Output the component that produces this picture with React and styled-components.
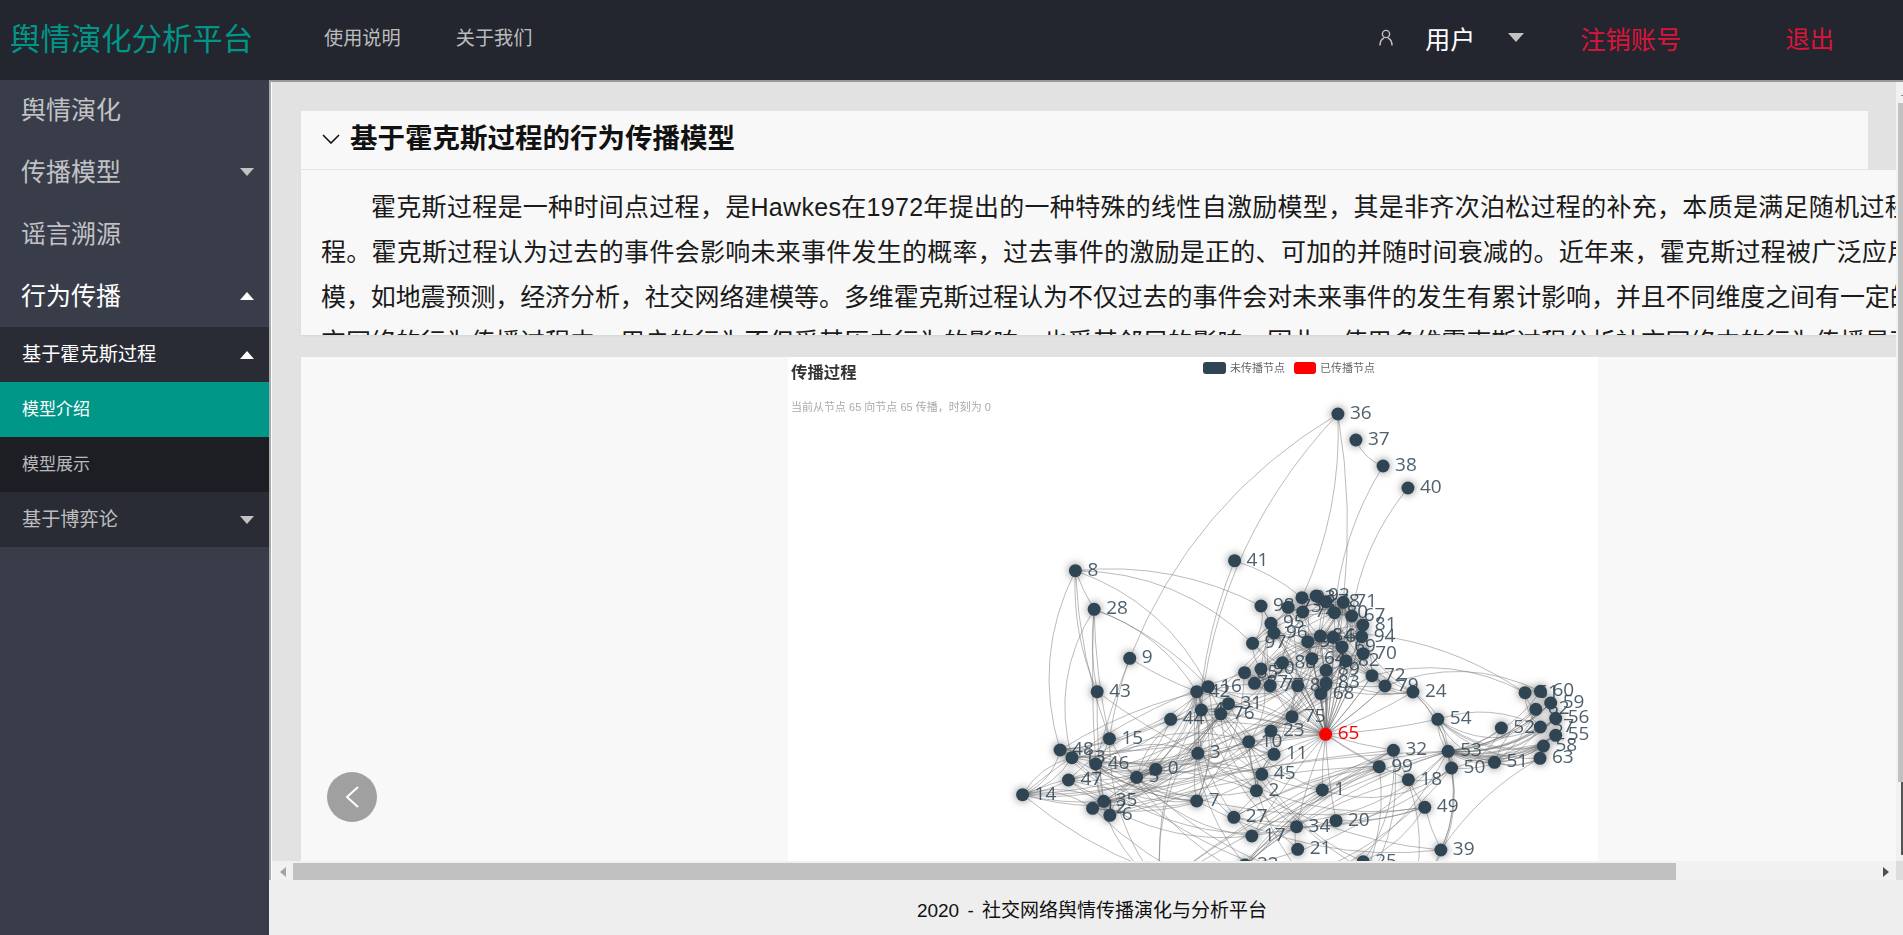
import React from 'react';
import styled, { createGlobalStyle } from 'styled-components';

const FONT = '"Liberation Sans", "Noto Sans CJK SC", sans-serif';

const GlobalStyle = createGlobalStyle`
  html, body {
    margin: 0;
    height: 100%;
    overflow: hidden;
    font-family: ${FONT};
  }
`;

const Page = styled.div`
  width: 1903px;
  height: 935px;
  display: flex;
  flex-direction: column;
  overflow: hidden;
`;

const TopBar = styled.header`
  height: 80px;
  flex: none;
  display: flex;
  align-items: center;
  background: #23262e;
`;

const Logo = styled.div`
  width: 324px;
  padding-left: 10px;
  box-sizing: border-box;
  font-size: 30.4px;
  color: #009688;
  margin-top: -6px;
`;

const TopLink = styled.a`
  font-size: 19.2px;
  color: rgba(255, 255, 255, 0.7);
  margin-right: 55px;
  margin-top: -6px;
`;

const UserArea = styled.div`
  margin-left: auto;
  display: flex;
  align-items: center;
  margin-top: -5px;
`;

const UserName = styled.span`
  font-size: 25px;
  color: #fff;
  margin-left: 31px;
`;

const DangerLink = styled.a`
  font-size: ${(p) => p.$size}px;
  color: #dc143c;
  margin-left: ${(p) => p.$left}px;
  margin-right: ${(p) => p.$right || 0}px;
`;

const Caret = styled.i`
  display: inline-block;
  width: 0;
  height: 0;
  border-left: ${(p) => p.$w / 2}px solid transparent;
  border-right: ${(p) => p.$w / 2}px solid transparent;
  border-top: ${(p) => (p.$up ? 0 : `${p.$h}px solid ${p.$color}`)};
  border-bottom: ${(p) => (p.$up ? `${p.$h}px solid ${p.$color}` : 0)};
`;

const HeaderCaret = styled(Caret)`
  margin-left: 33px;
`;

const MenuCaret = styled(Caret)`
  margin-top: 4px;
`;

const Columns = styled.div`
  flex: 1;
  display: flex;
  min-height: 0;
`;

const Sidebar = styled.nav`
  width: 269px;
  flex: none;
  background: #393d49;
`;

const NavItem = styled.div`
  height: 61.75px;
  box-sizing: border-box;
  padding: 0 15px 5px 21px;
  display: flex;
  align-items: center;
  justify-content: space-between;
  font-size: 25px;
  color: ${(p) => (p.$open ? '#fff' : 'rgba(255, 255, 255, 0.7)')};
`;

const SubMenu = styled.div`
  background: #2a2c35;
`;

const SubItem = styled.div`
  height: 55px;
  box-sizing: border-box;
  padding: 0 15px 4px 22px;
  display: flex;
  align-items: center;
  justify-content: space-between;
  font-size: ${(p) => (p.$leaf ? 17 : 19.2)}px;
  color: ${(p) => (p.$active || p.$open ? '#fff' : 'rgba(255, 255, 255, 0.7)')};
  background: ${(p) => (p.$active ? '#009688' : p.$leaf ? '#1d1e24' : 'transparent')};
`;

const Main = styled.main`
  flex: 1;
  min-width: 0;
  display: flex;
  flex-direction: column;
`;

const WorkArea = styled.div`
  flex: 1;
  min-height: 0;
  display: flex;
  flex-direction: column;
  border-top: 2px solid #999;
  border-left: 2px solid #aaa;
  box-shadow: inset 1px 0 0 #fff;
`;

const ScrollRow = styled.div`
  flex: 1;
  min-height: 0;
  display: flex;
`;

const Viewport = styled.div`
  flex: 1;
  min-width: 0;
  background: #e2e2e2;
  margin-left: 1px;
  padding: 29px 0 0 29px;
  overflow: hidden;
`;

const SectionHead = styled.h2`
  width: 1567px;
  height: 59px;
  box-sizing: border-box;
  margin: 0;
  padding: 0 0 3px 21px;
  display: flex;
  align-items: center;
  gap: 10px;
  background: #f8f8f8;
  border-bottom: 1px solid #e6e6e6;
  font-size: 27.5px;
  font-weight: 700;
  color: #111;
  line-height: 1;
`;

const SectionBody = styled.div`
  height: 165px;
  box-sizing: border-box;
  padding: 15px 0 0 20px;
  background: #f8f8f8;
  overflow: hidden;
  box-shadow: 0 1px 2px rgba(0, 0, 0, 0.06);
`;

const TextLine = styled.p`
  margin: 0;
  height: 45px;
  line-height: 45px;
  font-size: 25px;
  color: #1a1a1a;
  white-space: nowrap;
  letter-spacing: ${(p) => p.$track}px;
  text-indent: ${(p) => (p.$indent ? '50px' : 0)};
`;

const Carousel = styled.div`
  position: relative;
  width: 1784px;
  margin-top: 22px;
  display: flex;
  justify-content: center;
  background: #f8f8f8;
`;

const ChartFrame = styled.div`
  width: 810px;
  height: 640px;
  background: #fff;
`;

const ChartSvg = styled.svg`
  display: block;
  filter: blur(0.5px);
`;

const NodeGroup = styled.g`
  filter: drop-shadow(0 0 4px rgba(0, 0, 0, 0.5));
`;

const PrevButton = styled.button`
  position: absolute;
  left: 26px;
  top: 415px;
  width: 50px;
  height: 50px;
  padding: 0;
  border: 0;
  border-radius: 50%;
  background: #a0a0a0;
  display: flex;
  align-items: center;
  justify-content: center;
`;

const VBar = styled.div`
  width: 7px;
  flex: none;
  background: #f1f1f1;
  display: flex;
  flex-direction: column;
  align-items: flex-end;
  padding-top: 13px;
  box-sizing: border-box;
`;

const VTick = styled.div`
  width: 2px;
  height: 1px;
  background: #888;
`;

const VThumb = styled.div`
  width: 5px;
  height: 679px;
  margin-top: 7px;
  background: #c1c1c1;
`;

const VEnd = styled.div`
  width: 2px;
  height: 73px;
  background: #555;
`;

const HBar = styled.div`
  height: 19px;
  flex: none;
  display: flex;
  align-items: stretch;
  background: #f1f1f1;
  margin-left: 1px;
`;

const ArrowCell = styled.div`
  width: ${(p) => p.$w}px;
  flex: none;
  display: flex;
  align-items: center;
  justify-content: center;
  padding-top: 2px;
  box-sizing: border-box;
`;

const SideCaret = styled.i`
  width: 0;
  height: 0;
  border-top: 5px solid transparent;
  border-bottom: 5px solid transparent;
  border-left: ${(p) => (p.$right ? `6px solid ${p.$color}` : 0)};
  border-right: ${(p) => (p.$right ? 0 : `6px solid ${p.$color}`)};
`;

const HThumb = styled.div`
  width: 1383px;
  margin-top: 2px;
  background: #c1c1c1;
`;

const HSpacer = styled.div`
  flex: 1;
`;

const Corner = styled.div`
  width: 7px;
  flex: none;
  background: #dcdcdc;
`;

const Footer = styled.footer`
  height: 55px;
  flex: none;
  background: #eee;
  display: flex;
  align-items: center;
  justify-content: center;
  font-size: 19px;
  color: #111;
  word-spacing: 3px;
  padding: 1px 0 0 12px;
  box-sizing: border-box;
`;

// node positions were read off the chart, [label, x, y]; at() maps them into the svg
const at = (x, y) => ({ x: x / 2.613 + 212, y: y / 3 + 193 });

const upper = [
  ['93', 789, 143], ['92', 826, 138], ['78', 852, 155], ['71', 897, 157], ['73', 753, 172], ['74', 791, 186],
  ['80', 874, 188], ['67', 919, 198], ['81', 948, 225], ['94', 945, 260], ['84', 837, 258], ['66', 871, 262],
  ['91', 804, 275], ['69', 894, 291], ['70', 949, 311], ['64', 815, 326], ['82', 904, 333], ['88', 738, 338],
  ['89', 852, 361], ['72', 972, 377], ['79', 1006, 408], ['83', 852, 400], ['68', 838, 431], ['86', 778, 407],
  ['77', 706, 407], ['87', 665, 400], ['90', 682, 357], ['85', 639, 368], ['98', 682, 168], ['95', 708, 220],
  ['96', 716, 249], ['97', 660, 280], ['75', 763, 500],
];
const left = [
  ['16', 544, 410], ['42', 514, 425], ['31', 597, 461], ['4', 526, 480], ['76', 577, 492], ['44', 446, 508],
  ['23', 708, 543], ['10', 650, 575], ['3', 517, 610], ['11', 716, 613], ['45', 684, 673], ['0', 407, 658],
  ['5', 357, 682], ['15', 286, 566], ['48', 157, 600], ['13', 188, 623], ['46', 250, 642], ['47', 179, 690],
  ['14', 59, 734], ['35', 271, 754], ['12', 242, 775], ['6', 287, 796], ['7', 514, 753], ['2', 670, 722],
];
const lower = [
  ['1', 842, 720], ['27', 611, 802], ['17', 658, 858], ['34', 775, 830], ['20', 878, 812], ['21', 778, 898],
  ['25', 949, 935], ['49', 1110, 772], ['39', 1152, 900], ['18', 1067, 689], ['99', 991, 650], ['32', 1028, 601],
  ['22', 640, 945], ['19', 420, 1010], ['26', 560, 1060], ['29', 760, 1040], ['30', 900, 1090], ['33', 1080, 1030],
];
const right = [
  ['53', 1171, 604], ['50', 1180, 654], ['51', 1292, 637], ['54', 1144, 508], ['52', 1310, 534], ['63', 1411, 625],
  ['58', 1420, 588], ['55', 1452, 556], ['56', 1452, 505], ['57', 1412, 531], ['59', 1439, 459], ['62', 1400, 478],
  ['60', 1412, 424], ['61', 1372, 428], ['24', 1079, 426],
];
const outer = [
  ['8', 197, 62], ['28', 246, 178], ['9', 339, 325], ['43', 254, 425], ['41', 613, 32],
  ['36', 883, -408], ['37', 930, -330], ['38', 1001, -252], ['40', 1066, -186],
];
const hub = ['65', 851, 553];

const allNodes = [...outer, ...upper, ...left, ...lower, ...right, hub];
const byId = Object.fromEntries(allNodes.map(([id, x, y]) => [id, at(x, y)]));

const arc = (from, to, c = 0.2) => {
  const a = byId[from];
  const b = byId[to];
  const cx = (a.x + b.x) / 2 - (b.y - a.y) * c;
  const cy = (a.y + b.y) / 2 + (b.x - a.x) * c;
  return `M${a.x.toFixed(1)} ${a.y.toFixed(1)}Q${cx.toFixed(1)} ${cy.toFixed(1)} ${b.x.toFixed(1)} ${b.y.toFixed(1)}`;
};

let seed = 20200;
const rnd = (n) => {
  seed = (seed * 16807) % 2147483647;
  return seed % n;
};

const scatter = (groupA, groupB, count) => {
  const out = [];
  for (let i = 0; i < count; i += 1) {
    const a = groupA[rnd(groupA.length)][0];
    const b = groupB[rnd(groupB.length)][0];
    if (a !== b) out.push(arc(a, b, 0.15 + rnd(15) / 100));
  }
  return out;
};

const namedEdges = [
  ['8', '48', 0.2], ['8', '43', 0.12], ['8', '28', 0.05], ['8', '15', 0.08], ['16', '8', 0.2], ['98', '8', 0.15],
  ['97', '8', 0.2], ['28', '13', 0.22], ['28', '43', 0.08], ['28', '15', 0.05], ['28', '46', 0.03], ['42', '28', 0.18],
  ['16', '28', 0.12], ['9', '15', 0.05], ['9', '46', 0.03], ['9', '42', 0.05], ['43', '35', 0.04], ['43', '3', 0.05],
  ['36', '9', 0.17], ['36', '3', 0.19], ['93', '36', 0.12], ['71', '36', 0.07], ['37', '38', 0.22], ['38', '80', 0.12],
  ['40', '67', 0.14], ['93', '41', 0.1], ['41', '3', 0.1], ['61', '97', 0.22], ['61', '72', 0.2], ['60', '79', 0.22],
  ['97', '98', 0.25], ['14', '48', 0.25], ['14', '13', 0.2], ['14', '47', 0.1], ['14', '35', 0.08], ['53', '17', 0.1],
  ['53', '27', 0.12], ['99', '17', 0.12], ['99', '27', 0.1], ['32', '22', 0.1], ['99', '22', 0.12], ['53', '35', 0.06],
  ['32', '12', 0.05], ['99', '6', 0.08], ['85', '14', 0.1], ['87', '48', 0.12], ['63', '39', 0.12], ['49', '39', 0.05],
  ['18', '49', 0.04], ['34', '49', 0.08], ['20', '49', 0.1], ['53', '22', 0.1], ['32', '19', 0.08], ['99', '19', 0.09],
  ['53', '19', 0.07], ['32', '26', 0.1], ['99', '26', 0.11], ['18', '22', 0.12], ['1', '22', 0.1],
];

const hubEdges = [...upper.slice(9), ...left.slice(0, 12), ...lower.slice(0, 5), ...lower.slice(9, 12), ['24'], ['54']]
  .map(([id]) => arc('65', id, 0.04));

const edges = [
  ...namedEdges.map(([a, b, c]) => arc(a, b, c)),
  ...hubEdges,
  ...hubEdges.slice(0, 14),
  ...scatter(upper, upper, 70),
  ...scatter(left, left, 62),
  ...scatter(left, lower, 26),
  ...scatter(left, upper, 22),
  ...scatter(lower, right.slice(0, 2), 10),
  ...scatter(lower, lower, 9),
  ...scatter(upper, right.slice(14), 6),
  ...scatter(right.slice(0, 1), right, 26),
  ...scatter(right.slice(1, 4), right, 10),
  ...scatter(right, right, 12),
];

const PropagationChart = () => (
  <ChartSvg width="810" height="640" viewBox="0 0 810 640" role="img">
    <text x="3" y="21" fontSize="16.4" fontWeight="700" fill="#333" fontFamily={FONT}>传播过程</text>
    <text x="3" y="54" fontSize="11" fill="#aaa" fontFamily={FONT}>当前从节点 65 向节点 65 传播，时刻为 0</text>
    <rect x="415" y="5" width="23" height="12" rx="3" fill="#2f4554" />
    <text x="442" y="15" fontSize="11" fill="#666" fontFamily={FONT}>未传播节点</text>
    <rect x="506" y="5" width="22" height="12" rx="3" fill="#ff0000" />
    <text x="532" y="15" fontSize="11" fill="#666" fontFamily={FONT}>已传播节点</text>
    <g fill="none" stroke="#777" strokeOpacity="0.5" strokeWidth="1">
      {edges.map((d, i) => <path key={i} d={d} />)}
    </g>
    <g fontSize="19" fontFamily='"Open Sans", sans-serif'>
      {allNodes.map(([id]) => (
        <text
          key={id}
          x={byId[id].x + 12}
          y={byId[id].y + 5}
          fill={id === '65' ? '#ff0000' : '#2f4554'}
          fillOpacity={id === '65' ? 1 : 0.85}
        >
          {id}
        </text>
      ))}
    </g>
    <NodeGroup>
      {allNodes.map(([id]) => (
        <circle key={id} cx={byId[id].x} cy={byId[id].y} r="6.5" fill={id === '65' ? '#ff0000' : '#2f4554'} />
      ))}
    </NodeGroup>
  </ChartSvg>
);

const UserIcon = () => (
  <svg width="16" height="17" viewBox="0 0 16 17" fill="none" stroke="#c2c2c2" strokeWidth="1.4">
    <circle cx="8" cy="5" r="3.6" />
    <path d="M2 16.5c0-4 1.6-6.4 4-7.5M14 16.5c0-4-1.6-6.4-4-7.5" />
  </svg>
);

const ChevronDown = () => (
  <svg width="18" height="10" viewBox="0 0 18 10" fill="none" stroke="#111" strokeWidth="1.6">
    <path d="M1 1l8 8 8-8" />
  </svg>
);

const ChevronLeft = () => (
  <svg width="16" height="24" viewBox="0 0 16 24" fill="none" stroke="#fff" strokeWidth="2">
    <path d="M14 2L3 12l11 10" />
  </svg>
);

const App = () => (
  <Page>
    <GlobalStyle />
    <TopBar>
      <Logo>舆情演化分析平台</Logo>
      <TopLink>使用说明</TopLink>
      <TopLink>关于我们</TopLink>
      <UserArea>
        <UserIcon />
        <UserName>用户</UserName>
        <HeaderCaret $w={16} $h={9} $color="#c2c2c2" />
        <DangerLink $size={25.3} $left={56}>注销账号</DangerLink>
        <DangerLink $size={24.3} $left={104} $right={69}>退出</DangerLink>
      </UserArea>
    </TopBar>
    <Columns>
      <Sidebar>
        <NavItem>舆情演化</NavItem>
        <NavItem>
          传播模型
          <MenuCaret $w={15} $h={8} $color="#c2c2c2" />
        </NavItem>
        <NavItem>谣言溯源</NavItem>
        <NavItem $open>
          行为传播
          <MenuCaret $up $w={15} $h={8} $color="#fff" />
        </NavItem>
        <SubMenu>
          <SubItem $open>
            基于霍克斯过程
            <MenuCaret $up $w={15} $h={8} $color="#fff" />
          </SubItem>
          <SubItem $leaf $active>模型介绍</SubItem>
          <SubItem $leaf>模型展示</SubItem>
          <SubItem>
            基于博弈论
            <MenuCaret $w={15} $h={8} $color="#c2c2c2" />
          </SubItem>
        </SubMenu>
      </Sidebar>
      <Main>
        <WorkArea>
          <ScrollRow>
            <Viewport>
              <SectionHead>
                <ChevronDown />
                基于霍克斯过程的行为传播模型
              </SectionHead>
              <SectionBody>
                <TextLine $indent $track={0.3}>霍克斯过程是一种时间点过程，是Hawkes在1972年提出的一种特殊的线性自激励模型，其是非齐次泊松过程的补充，本质是满足随机过程的</TextLine>
                <TextLine $track={0.26}>程。霍克斯过程认为过去的事件会影响未来事件发生的概率，过去事件的激励是正的、可加的并随时间衰减的。近年来，霍克斯过程被广泛应用于</TextLine>
                <TextLine $track={-0.1}>模，如地震预测，经济分析，社交网络建模等。多维霍克斯过程认为不仅过去的事件会对未来事件的发生有累计影响，并且不同维度之间有一定的</TextLine>
                <TextLine $track={-0.1}>交网络的行为传播过程中，用户的行为不但受其历史行为的影响，也受其邻居的影响。因此，使用多维霍克斯过程分析社交网络中的行为传播是可</TextLine>
              </SectionBody>
              <Carousel>
                <ChartFrame>
                  <PropagationChart />
                </ChartFrame>
                <PrevButton aria-label="上一张">
                  <ChevronLeft />
                </PrevButton>
              </Carousel>
            </Viewport>
            <VBar>
              <VTick />
              <VThumb />
              <VEnd />
            </VBar>
          </ScrollRow>
          <HBar>
            <ArrowCell $w={21}>
              <SideCaret $color="#a3a3a3" />
            </ArrowCell>
            <HThumb />
            <HSpacer />
            <ArrowCell $w={20}>
              <SideCaret $right $color="#505050" />
            </ArrowCell>
            <Corner />
          </HBar>
        </WorkArea>
        <Footer>2020 - 社交网络舆情传播演化与分析平台</Footer>
      </Main>
    </Columns>
  </Page>
);

export default App;
